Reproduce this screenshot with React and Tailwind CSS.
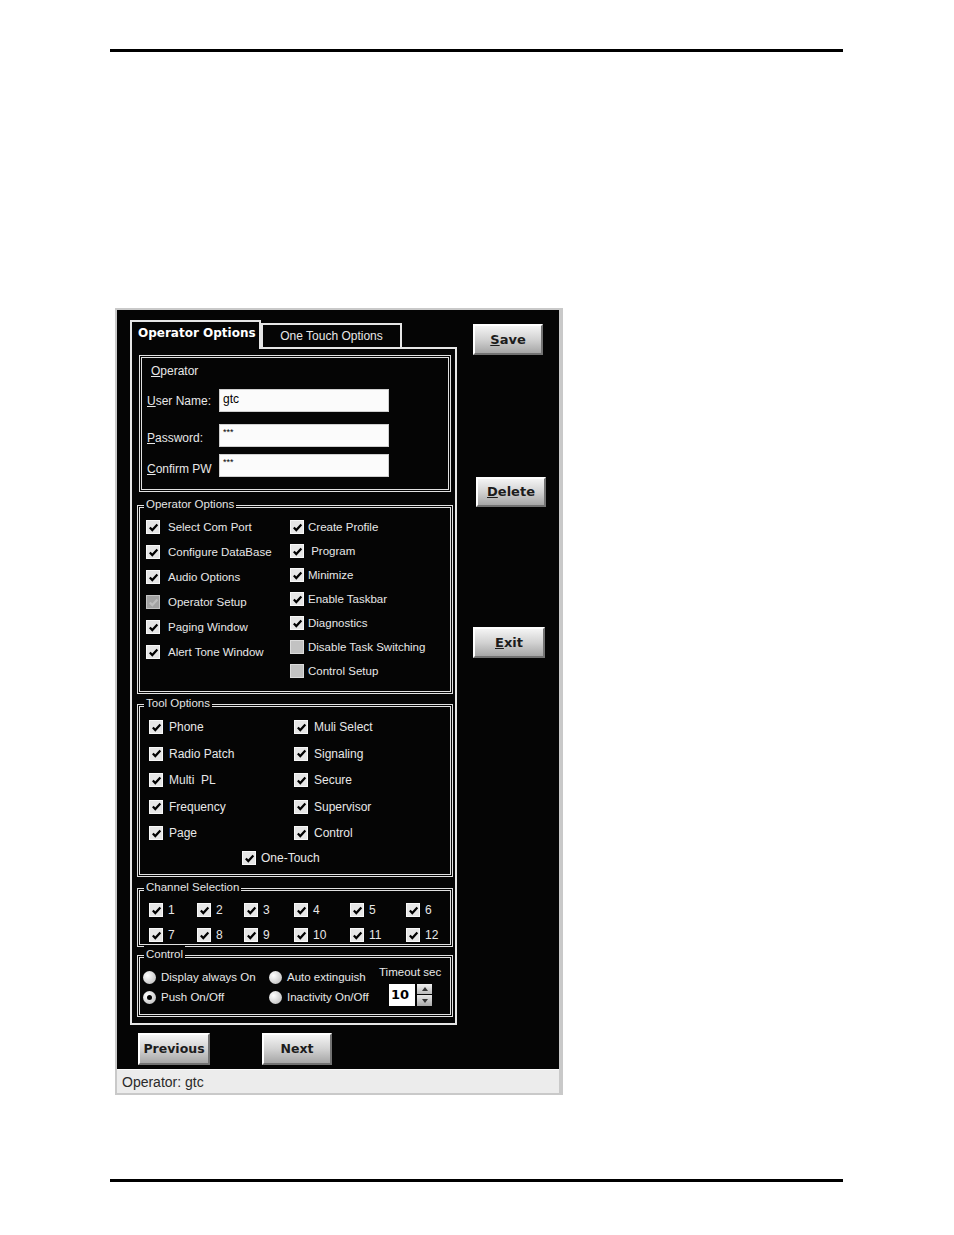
import React from 'react';

const sans = "font-['Liberation_Sans',Arial,sans-serif]";
const heavy = "font-['DejaVu_Sans',Verdana,sans-serif] font-bold";

const operatorLeft = [
  { label: 'Select Com Port' },
  { label: 'Configure DataBase' },
  { label: 'Audio Options' },
  { label: 'Operator Setup', disabled: true },
  { label: 'Paging Window' },
  { label: 'Alert Tone Window' },
];

const operatorRight = [
  { label: 'Create Profile' },
  { label: ' Program' },
  { label: 'Minimize' },
  { label: 'Enable Taskbar' },
  { label: 'Diagnostics' },
  { label: 'Disable Task Switching', disabled: true, checked: false },
  { label: 'Control Setup', disabled: true, checked: false },
];

const toolLeft = ['Phone', 'Radio Patch', 'Multi  PL', 'Frequency', 'Page'];
const toolRight = ['Muli Select', 'Signaling', 'Secure', 'Supervisor', 'Control'];

// channel columns, widths taken from the checkbox spacing
const channelCols = [
  { w: 'w-[48px]', top: '1', bottom: '7' },
  { w: 'w-[47px]', top: '2', bottom: '8' },
  { w: 'w-[50px]', top: '3', bottom: '9' },
  { w: 'w-[56px]', top: '4', bottom: '10' },
  { w: 'w-[56px]', top: '5', bottom: '11' },
  { w: 'w-[44px]', top: '6', bottom: '12' },
];

function CheckBox({ checked = true, disabled = false }) {
  let box = 'bg-[#e6e6e6] border-[#f8f8f8]';
  if (disabled) box = checked ? 'bg-[#a2a2a2] border-[#c4c4c4]' : 'bg-[#c2c2c2] border-[#dcdcdc]';
  return (
    <span className={`w-[14px] h-[14px] shrink-0 flex items-center justify-center border ${box}`}>
      {checked && (
        <svg viewBox="0 0 12 12" className="w-[11px] h-[11px]">
          <path
            d="M2 6 L4.7 8.8 L10.2 2.8"
            fill="none"
            stroke={disabled ? '#bdbdbd' : '#000'}
            strokeWidth="2.4"
          />
        </svg>
      )}
    </span>
  );
}

function Option({ label, checked, disabled, gap = 'ml-[6px]', className = '' }) {
  return (
    <div className={`flex items-center ${className}`}>
      <CheckBox checked={checked} disabled={disabled} />
      <span className={`${gap} whitespace-pre leading-[14px]`}>{label}</span>
    </div>
  );
}

function Radio({ label, on = false, className = '' }) {
  return (
    <div className={`flex items-center ${className}`}>
      <span className="w-[13px] h-[13px] shrink-0 rounded-full bg-[radial-gradient(circle_at_35%_35%,#ffffff,#b4b4b4)] flex items-center justify-center">
        {on && <span className="w-[5px] h-[5px] rounded-full bg-black" />}
      </span>
      <span className="ml-[5px] leading-[14px]">{label}</span>
    </div>
  );
}

function Group({ title, className = '', children }) {
  return (
    <div className={`relative border-[3px] border-double border-[#e2e2e2] ${className}`}>
      {title && (
        <span className="absolute -top-[12px] left-[4px] px-[2px] bg-[#050505] text-[11.5px] leading-[16px] text-[#e4e4e4]">
          {title}
        </span>
      )}
      {children}
    </div>
  );
}

function WinButton({ children, className = '' }) {
  return (
    <div
      className={`flex items-center justify-center bg-linear-to-b from-[#f4f4f4] via-[#d2d2d2] to-[#a6a6a6] border-2 border-t-white border-l-white border-r-[#727272] border-b-[#727272] text-[#1c1c1c] text-[12.5px] ${heavy} ${className}`}
    >
      {children}
    </div>
  );
}

function Field({ label, value, small, className = '', labelClass = '' }) {
  return (
    <div className={`flex items-center ${className}`}>
      <span className={`w-[72px] text-[12px] leading-[14px] ${labelClass}`}>{label}</span>
      <div className="w-[170px] h-[23px] bg-[#fbfbfb] border border-[#cfcfcf] pl-[3px] text-black">
        {small ? (
          <span className="block text-[9px] leading-[12px] pt-[1px]">{value}</span>
        ) : (
          <span className="block text-[12px] leading-[14px] pt-[2px]">{value}</span>
        )}
      </div>
    </div>
  );
}

function Spinner() {
  return (
    <div className="flex">
      <div className={`w-[26px] h-[22px] bg-white pl-[2px] pt-[3px] text-[13px] leading-[15px] text-black ${heavy}`}>10</div>
      <div className="ml-[2px] w-[15px] flex flex-col gap-[1px]">
        <div className="h-[10px] bg-linear-to-b from-[#f2f2f2] to-[#b9b9b9] flex items-center justify-center">
          <svg viewBox="0 0 6 4" className="w-[6px] h-[4px]"><path d="M0 4 L3 0 L6 4 Z" fill="#333" /></svg>
        </div>
        <div className="h-[11px] bg-linear-to-b from-[#e6e6e6] to-[#a9a9a9] flex items-center justify-center">
          <svg viewBox="0 0 6 4" className="w-[6px] h-[4px]"><path d="M0 0 L3 4 L6 0 Z" fill="#333" /></svg>
        </div>
      </div>
    </div>
  );
}

export default function App() {
  return (
    <div className={`w-[954px] h-[1235px] bg-white overflow-hidden ${sans}`}>
      <div className="ml-[110px] mt-[49px] w-[733px] h-[3px] bg-black" />

      {/* dialog window */}
      <div className="ml-[115px] mt-[256px] w-[448px] h-[787px] border-l-2 border-t-2 border-r-4 border-b-2 border-[#c9c9c9] bg-[#050505] flex flex-col text-[#e8e8e8]">
        <div className="flex h-[759px]">
          <div className="w-[340px] shrink-0 pl-[13px] pt-[10px] flex flex-col">
            {/* tabs */}
            <div className="flex h-[27px] items-end">
              <div className={`relative z-10 -mb-[2px] h-[29px] w-[131px] bg-[#050505] border-t-2 border-x-2 border-[#e6e6e6] pl-[6px] pt-[3px] text-[12px] leading-[16px] text-white ${heavy}`}>
                Operator Options
              </div>
              <div className="h-[24px] w-[141px] border-t-2 border-x-2 border-[#e6e6e6] flex items-center justify-center text-[12px] leading-[14px]">
                One Touch Options
              </div>
            </div>

            {/* tab panel */}
            <div className="w-[327px] h-[678px] border-2 border-[#e6e6e6]">
              <Group className="ml-[7px] mt-[6px] w-[312px] h-[137px] pl-[5px]">
                <div className="ml-[4px] mt-[6px] text-[12px] leading-[14px]">
                  <span className="underline">O</span>perator
                </div>
                <Field
                  className="mt-[11px]"
                  label={<><span className="underline">U</span>ser Name:</>}
                  value="gtc"
                />
                <Field
                  className="mt-[12px]"
                  labelClass="pt-[5px]"
                  label={<><span className="underline">P</span>assword:</>}
                  value="***"
                  small
                />
                <Field
                  className="mt-[7px]"
                  labelClass="pt-[7px]"
                  label={<><span className="underline">C</span>onfirm PW</>}
                  value="***"
                  small
                />
              </Group>

              <Group title="Operator Options" className="ml-[5px] mt-[13px] w-[316px] h-[189px] flex text-[11.5px]">
                <div className="w-[150px] pl-[6px] pt-[6.5px] flex flex-col">
                  {operatorLeft.map((o) => (
                    <Option key={o.label} {...o} gap="ml-[8px]" className="h-[25px]" />
                  ))}
                </div>
                <div className="pt-[7px] flex flex-col">
                  {operatorRight.map((o) => (
                    <Option key={o.label} {...o} gap="ml-[4px]" className="h-[24px]" />
                  ))}
                </div>
              </Group>

              <Group title=" Tool Options" className="ml-[5px] mt-[10px] w-[316px] h-[173px] text-[12px]">
                <div className="flex pt-[6.75px]">
                  <div className="w-[154px] pl-[9px] flex flex-col">
                    {toolLeft.map((t) => (
                      <Option key={t} label={t} className="h-[26.5px]" />
                    ))}
                  </div>
                  <div className="flex flex-col">
                    {toolRight.map((t) => (
                      <Option key={t} label={t} className="h-[26.5px]" />
                    ))}
                  </div>
                </div>
                <Option label="One-Touch" gap="ml-[5px]" className="h-[24px] pl-[102px]" />
              </Group>

              <Group title="Channel Selection" className="ml-[5px] mt-[11px] w-[316px] h-[59px] pl-[9px] pt-[6.5px] text-[12px]">
                <div className="flex h-[25px]">
                  {channelCols.map((c) => (
                    <Option key={c.top} label={c.top} gap="ml-[5px]" className={c.w} />
                  ))}
                </div>
                <div className="flex h-[25px]">
                  {channelCols.map((c) => (
                    <Option key={c.bottom} label={c.bottom} gap="ml-[5px]" className={c.w} />
                  ))}
                </div>
              </Group>

              <Group title="Control" className="ml-[5px] mt-[8px] w-[316px] h-[62px] pl-[3px] pt-[9px] text-[11.5px]">
                <div className="flex h-[20px] items-center">
                  <Radio label="Display always On" className="w-[126px]" />
                  <Radio label="Auto extinguish" className="w-[110px]" />
                  <span className="self-start -mt-[2px] leading-[14px]">Timeout sec</span>
                </div>
                <div className="flex h-[20px] items-center">
                  <Radio label="Push On/Off" on className="w-[126px]" />
                  <Radio label="Inactivity On/Off" className="w-[110px]" />
                  <div className="ml-[10px] self-start -mt-[3px]">
                    <Spinner />
                  </div>
                </div>
              </Group>
            </div>

            <div className="flex mt-[8px] ml-[8px] gap-[52px]">
              <WinButton className="w-[72px] h-[32px]">Previous</WinButton>
              <WinButton className="w-[70px] h-[32px]">Next</WinButton>
            </div>
          </div>

          {/* right button column */}
          <div className="flex flex-col items-start">
            <WinButton className="ml-[16px] mt-[14px] w-[70px] h-[31px] text-[13px]">
              <span className="underline">S</span>ave
            </WinButton>
            <WinButton className="ml-[19px] mt-[122px] w-[70px] h-[30px] text-[13px]">
              <span className="underline">D</span>elete
            </WinButton>
            <WinButton className="ml-[16px] mt-[120px] w-[72px] h-[31px] text-[13px]">
              <span className="underline">E</span>xit
            </WinButton>
          </div>
        </div>

        {/* status bar */}
        <div className="h-[24px] bg-[#ececec] border-t border-[#fafafa] pl-[5px] flex items-center text-[14px] leading-[16px] text-[#2a2a2a]">
          Operator: gtc
        </div>
      </div>

      <div className="ml-[110px] mt-[84px] w-[733px] h-[3px] bg-black" />
    </div>
  );
}
